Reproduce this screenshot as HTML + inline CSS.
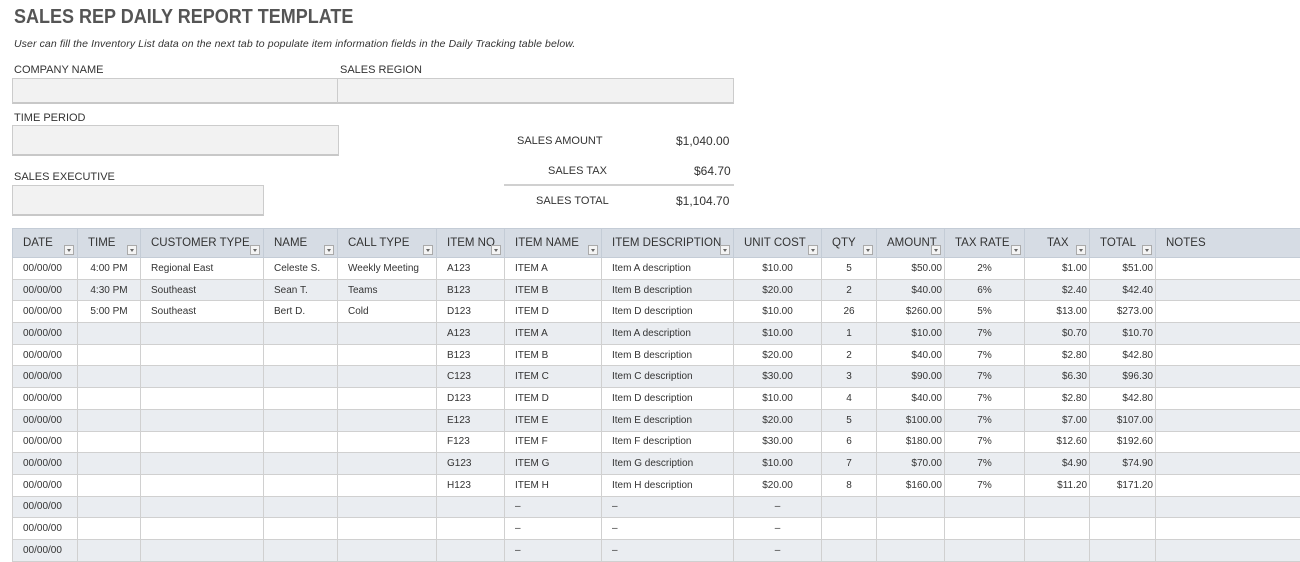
<!DOCTYPE html>
<html><head><meta charset="utf-8"><style>
body{margin:0;width:1300px;height:562px;background:#fff;font-family:"Liberation Sans",sans-serif;color:#333;position:relative;overflow:hidden}
.a{position:absolute;white-space:nowrap}
.t{left:14px;top:6px;font-size:20px;font-weight:bold;color:#555;transform:scaleX(0.9);transform-origin:left}
.s{left:14px;top:38px;font-size:10.5px;font-style:italic;color:#333;letter-spacing:0.1px}
.l{font-size:11px;color:#333}
.box{position:absolute;background:#f2f2f2;border:1px solid #ccc;border-bottom:2px solid #c8c8c8;box-sizing:border-box}
table{position:absolute;left:12px;top:228px;width:1288px;border-collapse:collapse;table-layout:fixed;font-size:10px}
td,th{border:1px solid #d0d0d0;height:20.7px;padding:0 10px;white-space:nowrap;overflow:hidden}
th{background:#d6dce4;height:28px;font-weight:normal;font-size:11.5px;text-align:left;position:relative;vertical-align:middle;color:#333;border-color:#c4ccd6}
th i{position:absolute;right:3px;bottom:2px;width:10px;height:10px;border:1px solid #aaa;background:#f4f4f4;box-sizing:border-box}
th i:after{content:"";position:absolute;left:2px;top:3px;border-left:2.5px solid transparent;border-right:2.5px solid transparent;border-top:3px solid #666}
tr:nth-child(odd) td{background:#eaedf1}
.c{text-align:center}.r{text-align:right;padding-right:2px}
</style></head><body>
<div class="a t">SALES REP DAILY REPORT TEMPLATE</div>
<div class="a s">User can fill the Inventory List data on the next tab to populate item information fields in the Daily Tracking table below.</div>
<div class="a l" style="left:14px;top:64px">COMPANY NAME</div>
<div class="a l" style="left:340px;top:64px">SALES REGION</div>
<div class="box" style="left:12px;top:78px;width:326px;height:26px"></div>
<div class="box" style="left:337px;top:78px;width:397px;height:26px"></div>
<div class="a l" style="left:14px;top:112px">TIME PERIOD</div>
<div class="box" style="left:12px;top:125px;width:327px;height:31px"></div>
<div class="a l" style="left:14px;top:171px">SALES EXECUTIVE</div>
<div class="box" style="left:12px;top:185px;width:252px;height:31px"></div>
<div class="a l" style="left:517px;top:135px">SALES AMOUNT</div>
<div class="a" style="left:676px;top:134px;font-size:12px">$1,040.00</div>
<div class="a l" style="left:548px;top:165px">SALES TAX</div>
<div class="a" style="left:694px;top:164px;font-size:12px">$64.70</div>
<div class="a" style="left:504px;top:184px;width:230px;height:2px;background:#d0d0d0"></div>
<div class="a l" style="left:536px;top:195px">SALES TOTAL</div>
<div class="a" style="left:676px;top:194px;font-size:12px">$1,104.70</div>
<table>
<colgroup><col style="width:65px"><col style="width:63px"><col style="width:123px"><col style="width:74px"><col style="width:99px"><col style="width:68px"><col style="width:97px"><col style="width:132px"><col style="width:88px"><col style="width:55px"><col style="width:68px"><col style="width:80px"><col style="width:65px"><col style="width:66px"><col style="width:145px"></colgroup>
<tr><th>DATE<i></i></th><th>TIME<i></i></th><th>CUSTOMER TYPE<i></i></th><th>NAME<i></i></th><th>CALL TYPE<i></i></th><th>ITEM NO<i></i></th><th>ITEM NAME<i></i></th><th>ITEM DESCRIPTION<i></i></th><th>UNIT COST<i></i></th><th>QTY<i></i></th><th>AMOUNT<i></i></th><th>TAX RATE<i></i></th><th style="padding-left:22px">TAX<i></i></th><th>TOTAL<i></i></th><th>NOTES</th></tr>
<tr><td>00/00/00</td><td class="c">4:00 PM</td><td>Regional East</td><td>Celeste S.</td><td>Weekly Meeting</td><td>A123</td><td>ITEM A</td><td>Item A description</td><td class="c">$10.00</td><td class="c">5</td><td class="r">$50.00</td><td class="c">2%</td><td class="r">$1.00</td><td class="r">$51.00</td><td></td></tr>
<tr><td>00/00/00</td><td class="c">4:30 PM</td><td>Southeast</td><td>Sean T.</td><td>Teams</td><td>B123</td><td>ITEM B</td><td>Item B description</td><td class="c">$20.00</td><td class="c">2</td><td class="r">$40.00</td><td class="c">6%</td><td class="r">$2.40</td><td class="r">$42.40</td><td></td></tr>
<tr><td>00/00/00</td><td class="c">5:00 PM</td><td>Southeast</td><td>Bert D.</td><td>Cold</td><td>D123</td><td>ITEM D</td><td>Item D description</td><td class="c">$10.00</td><td class="c">26</td><td class="r">$260.00</td><td class="c">5%</td><td class="r">$13.00</td><td class="r">$273.00</td><td></td></tr>
<tr><td>00/00/00</td><td></td><td></td><td></td><td></td><td>A123</td><td>ITEM A</td><td>Item A description</td><td class="c">$10.00</td><td class="c">1</td><td class="r">$10.00</td><td class="c">7%</td><td class="r">$0.70</td><td class="r">$10.70</td><td></td></tr>
<tr><td>00/00/00</td><td></td><td></td><td></td><td></td><td>B123</td><td>ITEM B</td><td>Item B description</td><td class="c">$20.00</td><td class="c">2</td><td class="r">$40.00</td><td class="c">7%</td><td class="r">$2.80</td><td class="r">$42.80</td><td></td></tr>
<tr><td>00/00/00</td><td></td><td></td><td></td><td></td><td>C123</td><td>ITEM C</td><td>Item C description</td><td class="c">$30.00</td><td class="c">3</td><td class="r">$90.00</td><td class="c">7%</td><td class="r">$6.30</td><td class="r">$96.30</td><td></td></tr>
<tr><td>00/00/00</td><td></td><td></td><td></td><td></td><td>D123</td><td>ITEM D</td><td>Item D description</td><td class="c">$10.00</td><td class="c">4</td><td class="r">$40.00</td><td class="c">7%</td><td class="r">$2.80</td><td class="r">$42.80</td><td></td></tr>
<tr><td>00/00/00</td><td></td><td></td><td></td><td></td><td>E123</td><td>ITEM E</td><td>Item E description</td><td class="c">$20.00</td><td class="c">5</td><td class="r">$100.00</td><td class="c">7%</td><td class="r">$7.00</td><td class="r">$107.00</td><td></td></tr>
<tr><td>00/00/00</td><td></td><td></td><td></td><td></td><td>F123</td><td>ITEM F</td><td>Item F description</td><td class="c">$30.00</td><td class="c">6</td><td class="r">$180.00</td><td class="c">7%</td><td class="r">$12.60</td><td class="r">$192.60</td><td></td></tr>
<tr><td>00/00/00</td><td></td><td></td><td></td><td></td><td>G123</td><td>ITEM G</td><td>Item G description</td><td class="c">$10.00</td><td class="c">7</td><td class="r">$70.00</td><td class="c">7%</td><td class="r">$4.90</td><td class="r">$74.90</td><td></td></tr>
<tr><td>00/00/00</td><td></td><td></td><td></td><td></td><td>H123</td><td>ITEM H</td><td>Item H description</td><td class="c">$20.00</td><td class="c">8</td><td class="r">$160.00</td><td class="c">7%</td><td class="r">$11.20</td><td class="r">$171.20</td><td></td></tr>
<tr><td>00/00/00</td><td></td><td></td><td></td><td></td><td></td><td>–</td><td>–</td><td class="c">–</td><td></td><td></td><td></td><td></td><td></td><td></td></tr>
<tr><td>00/00/00</td><td></td><td></td><td></td><td></td><td></td><td>–</td><td>–</td><td class="c">–</td><td></td><td></td><td></td><td></td><td></td><td></td></tr>
<tr><td>00/00/00</td><td></td><td></td><td></td><td></td><td></td><td>–</td><td>–</td><td class="c">–</td><td></td><td></td><td></td><td></td><td></td><td></td></tr>
</table>
</body></html>
